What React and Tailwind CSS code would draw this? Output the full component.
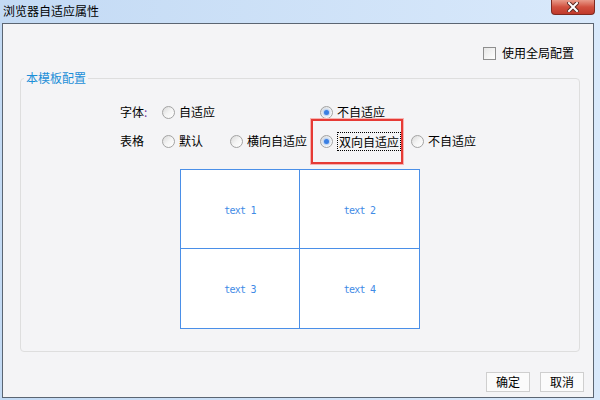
import React from 'react';

const cjk = { fontFamily: '"Noto Sans CJK SC", "Liberation Sans", sans-serif' };

const Radio = ({ checked }) => (
    <span className="relative flex h-[13px] w-[13px] shrink-0 items-center justify-center rounded-full border border-[#a3a3a3] bg-gradient-to-br from-[#d9d9d9] via-[#f4f4f4] to-white">
        {checked && <span className="h-[5px] w-[5px] rounded-full bg-[#3a7fe3] shadow-[0_0_2px_1px_#a9c8f2]"></span>}
    </span>
);

const Option = ({ label, checked, width, focus, marked }) => (
    <div className="relative flex h-[20px] items-center gap-[4px]" style={width ? { width } : undefined}>
        {marked && (
            <div className="pointer-events-none absolute left-[-9px] top-[-12px] h-[45px] w-[92px] border-2 border-[#e63a35] shadow-[0_0_0_1px_#f6b3b1]"></div>
        )}
        <Radio checked={checked} />
        <span
            className={focus ? 'border border-dotted border-black px-[1px] text-[12px] leading-[17px] text-black' : 'text-[12px] leading-[16px] text-black'}
        >
            {label}
        </span>
    </div>
);

const Cell = ({ text, className }) => (
    <div className={'flex items-center justify-center bg-white ' + className}>
        <span className="pt-[2px] text-[10px] text-[#3f8be6]" style={{ fontFamily: '"DejaVu Sans Mono", monospace', letterSpacing: '-0.8px' }}>
            {text}
        </span>
    </div>
);

const App = () => {
    return (
        <div className="flex h-[400px] w-[600px] flex-col overflow-hidden bg-gradient-to-r from-[#c3daf4] to-[#d9e9fb]" style={cjk}>
            {/* title bar */}
            <div className="flex h-[23px] shrink-0 items-start justify-between">
                <span className="pl-[3px] pt-[3px] text-[12px] leading-[16px] text-black">浏览器自适应属性</span>
                <div className="mr-[5px] flex h-[15px] w-[44px] items-center justify-center rounded-b-[4px] border border-t-0 border-[#7e2a20] bg-gradient-to-b from-[#e89a8a] via-[#d1503f] to-[#c0392b]">
                    <svg width="12" height="10" viewBox="0 0 12 10">
                        <path d="M2 1 L10 9 M10 1 L2 9" stroke="#5a2a24" strokeWidth="4" strokeLinecap="square" />
                        <path d="M2 1 L10 9 M10 1 L2 9" stroke="#ffffff" strokeWidth="2" strokeLinecap="square" />
                    </svg>
                </div>
            </div>

            {/* client area */}
            <div className="mb-[2px] ml-[2px] mr-[6px] flex flex-1 flex-col border border-[#5b6572] bg-[#f4f4f6]">
                <div className="mr-[19px] mt-[21px] flex h-[16px] items-center justify-end gap-[6px]">
                    <span className="h-[13px] w-[13px] border border-[#8e8e8e] bg-gradient-to-br from-[#e6e6e6] to-white"></span>
                    <span className="text-[12px] leading-[16px] text-black">使用全局配置</span>
                </div>

                <fieldset className="ml-[17px] mt-[9px] w-[560px] rounded-[4px] border border-[#dedede]">
                    <legend className="ml-[3px] px-[2px] text-[12px] leading-[16px] text-[#1c8fd8]">本模板配置</legend>
                    <div className="flex flex-col pb-[22px] pl-[99px] pt-[16px]">
                        <div className="flex h-[20px] items-center">
                            <span className="w-[42px] text-[12px] leading-[16px] text-black">
                                字体<span className="text-[#7b3fa0]">:</span>
                            </span>
                            <Option label="自适应" width={158} />
                            <Option label="不自适应" checked />
                        </div>
                        <div className="mt-[9px] flex h-[20px] items-center">
                            <span className="w-[42px] text-[12px] leading-[16px] text-black">表格</span>
                            <Option label="默认" width={68} />
                            <Option label="横向自适应" width={90} />
                            <Option label="双向自适应" width={91} checked focus marked />
                            <Option label="不自适应" />
                        </div>
                        <div className="ml-[60px] mt-[18px] grid h-[160px] w-[240px] grid-cols-2 grid-rows-2 border border-[#4a8fe8]">
                            <Cell text="text 1" className="border-b border-r border-[#4a8fe8]" />
                            <Cell text="text 2" className="border-b border-[#4a8fe8]" />
                            <Cell text="text 3" className="border-r border-[#4a8fe8]" />
                            <Cell text="text 4" className="" />
                        </div>
                    </div>
                </fieldset>

                <div className="mr-[9px] mt-[20px] flex justify-end gap-[10px]">
                    <button className="h-[20px] w-[44px] border border-[#cfcfcf] bg-[#fbfbfb] text-[12px] leading-[16px] text-black">确定</button>
                    <button className="h-[20px] w-[44px] border border-[#cfcfcf] bg-[#fbfbfb] text-[12px] leading-[16px] text-black">取消</button>
                </div>
            </div>
        </div>
    );
};

export default App;
